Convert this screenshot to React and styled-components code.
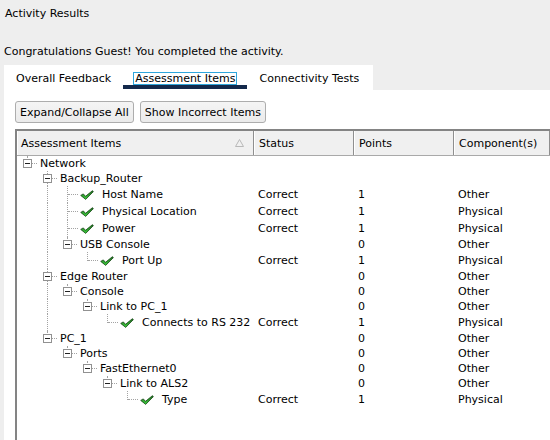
import React from "react";
import styled, { createGlobalStyle } from "styled-components";

const GlobalStyle = createGlobalStyle`
  html, body, #root {
    height: 100%;
  }
  body {
    margin: 0;
    background: #eeeeee;
    font-family: "DejaVu Sans", Verdana, sans-serif;
    font-size: 11px;
    color: #000;
    overflow: hidden;
  }
`;

const Page = styled.div`
  display: flex;
  flex-direction: column;
  height: 100%;
`;

const Title = styled.div`
  padding: 7px 0 0 5px;
  line-height: 13px;
`;

const Message = styled.div`
  margin-top: 25px;
  padding-left: 4px;
  line-height: 13px;
`;

const TabBar = styled.div`
  display: flex;
  margin: 7px 0 0 4px;
  width: 369px;
  height: 25px;
  background: #fff;
`;

const Tab = styled.div`
  position: relative;
  display: flex;
  align-items: center;
  padding: 2px 10px 0;
  cursor: pointer;

  &::after {
    content: "";
    display: ${({ $active }) => ($active ? "block" : "none")};
    position: absolute;
    left: 0;
    right: 0;
    top: 20px;
    height: 4px;
    background: #13294b;
  }
`;

const TabLabel = styled.span`
  padding: 0 1px;
  line-height: 11px;
  border: 1px solid ${({ $focused }) => ($focused ? "#2ea6dc" : "transparent")};
`;

const Panel = styled.div`
  flex: 1;
  min-height: 0;
  display: flex;
  flex-direction: column;
  margin-left: 4px;
  padding: 11px 0 0 11px;
  background: #fff;
`;

const Toolbar = styled.div`
  display: flex;
  gap: 6px;
`;

const Button = styled.button`
  height: 22px;
  padding: 0 4px;
  border: 1px solid #adadad;
  border-radius: 3px;
  background: linear-gradient(#f5f5f5, #ebebeb);
  font: inherit;
  color: #000;
`;

const Grid = styled.div`
  flex: 1;
  margin-top: 6px;
  border-top: 2px solid #848484;
  border-left: 2px solid #848484;
  overflow: hidden;
`;

const columns = "237px 100px 100px 1fr";

const HeaderRow = styled.div`
  display: grid;
  grid-template-columns: ${columns};
  height: 25px;
  box-sizing: border-box;
  background: #f0f0f0;
  border-bottom: 1px solid #a9a9a9;
`;

const HeaderCell = styled.div`
  display: flex;
  align-items: center;
  padding-left: ${({ $first }) => ($first ? "4px" : "5px")};
  border-right: 1px solid #8f8f8f;
  box-shadow: inset 1px 0 #ffffff;
  white-space: nowrap;
`;

const SortMark = styled.svg`
  margin-left: auto;
  margin-right: 9px;
`;

const Row = styled.div`
  display: grid;
  grid-template-columns: ${columns};
  height: ${({ $tall }) => ($tall ? 17 : 15)}px;
`;

const Cell = styled.div`
  display: flex;
  align-items: center;
  padding-left: 4px;
  white-space: nowrap;
`;

const TreeCell = styled.div`
  display: flex;
  align-items: stretch;
  white-space: nowrap;
  overflow: hidden;
`;

const Guide = styled.span`
  position: relative;
  flex: 0 0 20px;
  display: flex;
  align-items: center;

  &::before {
    content: "";
    display: ${({ $kind }) => ($kind === "none" ? "none" : "block")};
    position: absolute;
    left: 10px;
    top: 0;
    bottom: ${({ $kind }) => ($kind === "last" ? "calc(50% - 0.5px)" : "0")};
    border-left: 1px dotted #a3a3a3;
  }

  &::after {
    content: "";
    display: ${({ $kind }) => ($kind === "mid" || $kind === "last" ? "block" : "none")};
    position: absolute;
    left: 11px;
    right: ${({ $leaf }) => ($leaf ? "-1px" : "0")};
    top: calc(50% - 0.5px);
    border-top: 1px dotted #a3a3a3;
  }
`;

const Expander = styled.span`
  position: relative;
  z-index: 1;
  display: flex;
  align-items: center;
  justify-content: center;
  width: 9px;
  height: 9px;
  box-sizing: border-box;
  margin-left: 6px;
  border: 1px solid #919191;
  background: #fff;

  &::after {
    content: "";
    width: 5px;
    height: 1px;
    background: #222;
  }
`;

const CheckMark = styled.svg`
  flex: none;
  align-self: center;
  margin-left: 3px;
`;

const ItemLabel = styled.span`
  display: flex;
  align-items: center;
  margin-left: ${({ $leaf }) => ($leaf ? "8px" : "3px")};
`;

const tree = {
  name: "Network",
  children: [
    {
      name: "Backup_Router",
      children: [
        { name: "Host Name", status: "Correct", points: "1", comp: "Other" },
        { name: "Physical Location", status: "Correct", points: "1", comp: "Physical" },
        { name: "Power", status: "Correct", points: "1", comp: "Physical" },
        {
          name: "USB Console",
          points: "0",
          comp: "Other",
          children: [{ name: "Port Up", status: "Correct", points: "1", comp: "Physical" }],
        },
      ],
    },
    {
      name: "Edge Router",
      points: "0",
      comp: "Other",
      children: [
        {
          name: "Console",
          points: "0",
          comp: "Other",
          children: [
            {
              name: "Link to PC_1",
              points: "0",
              comp: "Other",
              children: [
                { name: "Connects to RS 232", status: "Correct", points: "1", comp: "Physical" },
              ],
            },
          ],
        },
      ],
    },
    {
      name: "PC_1",
      points: "0",
      comp: "Other",
      children: [
        {
          name: "Ports",
          points: "0",
          comp: "Other",
          children: [
            {
              name: "FastEthernet0",
              points: "0",
              comp: "Other",
              children: [
                {
                  name: "Link to ALS2",
                  points: "0",
                  comp: "Other",
                  children: [{ name: "Type", status: "Correct", points: "1", comp: "Physical" }],
                },
              ],
            },
          ],
        },
      ],
    },
  ],
};

// flatten the tree into rows, working out which guide lines each row draws
function flatten(node, trail = [], hasNext = false, out = []) {
  const guides = [...trail.map((t) => (t ? "through" : "none")), hasNext ? "mid" : "last"];
  out.push({ ...node, guides, leaf: !node.children });
  (node.children || []).forEach((child, i, arr) =>
    flatten(child, [...trail, hasNext], i < arr.length - 1, out)
  );
  return out;
}

const rows = flatten(tree);

function Check() {
  return (
    <CheckMark width="14" height="10" viewBox="0 0 14 10">
      <defs>
        <linearGradient id="ck" x1="0" y1="0" x2="0" y2="1">
          <stop offset="0" stopColor="#1a6a1a" />
          <stop offset="1" stopColor="#3fd23f" />
        </linearGradient>
      </defs>
      <path
        d="M0.7 5.4 L3.3 3.9 L5.5 6.3 L12.4 0.7 L13.4 1.6 L5.7 9.4 Z"
        fill="url(#ck)"
        stroke="#174517"
        strokeWidth="0.8"
        strokeLinejoin="round"
      />
    </CheckMark>
  );
}

export default function App() {
  return (
    <Page>
      <GlobalStyle />
      <Title>Activity Results</Title>
      <Message>Congratulations Guest! You completed the activity.</Message>
      <TabBar>
        <Tab>
          <TabLabel>Overall Feedback</TabLabel>
        </Tab>
        <Tab $active>
          <TabLabel $focused>Assessment Items</TabLabel>
        </Tab>
        <Tab>
          <TabLabel>Connectivity Tests</TabLabel>
        </Tab>
      </TabBar>
      <Panel>
        <Toolbar>
          <Button>Expand/Collapse All</Button>
          <Button>Show Incorrect Items</Button>
        </Toolbar>
        <Grid>
          <HeaderRow>
            <HeaderCell $first>
              Assessment Items
              <SortMark width="9" height="8" viewBox="0 0 9 8">
                <polygon points="0.5,7.5 4.5,0.5 8.5,7.5" fill="none" stroke="#b8b8b8" />
              </SortMark>
            </HeaderCell>
            <HeaderCell>Status</HeaderCell>
            <HeaderCell>Points</HeaderCell>
            <HeaderCell>Component(s)</HeaderCell>
          </HeaderRow>
          {rows.map((r) => (
            <Row key={r.name} $tall={r.leaf}>
              <TreeCell>
                {r.guides.map((g, i) => {
                  const own = i === r.guides.length - 1;
                  return (
                    <Guide key={i} $kind={g} $leaf={r.leaf && own}>
                      {own && !r.leaf && <Expander />}
                    </Guide>
                  );
                })}
                {r.leaf && <Check />}
                <ItemLabel $leaf={r.leaf}>{r.name}</ItemLabel>
              </TreeCell>
              <Cell>{r.status}</Cell>
              <Cell>{r.points}</Cell>
              <Cell>{r.comp}</Cell>
            </Row>
          ))}
        </Grid>
      </Panel>
    </Page>
  );
}
